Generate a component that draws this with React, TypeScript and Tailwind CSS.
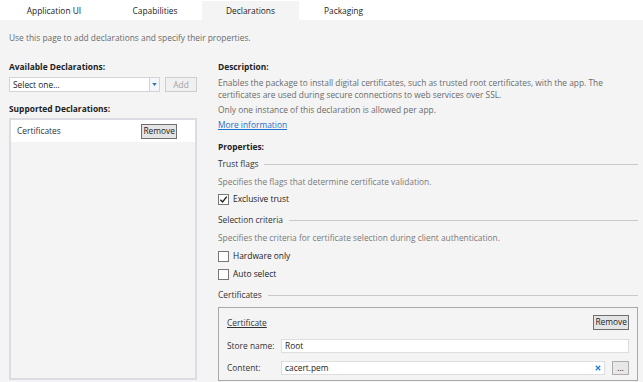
import React from 'react';

const tabs = [
  { label: 'Application UI', w: 'w-[108px]' },
  { label: 'Capabilities', w: 'w-[94px]' },
  { label: 'Declarations', w: 'w-[97px]', active: true },
  { label: 'Packaging', w: 'w-[89px]' },
];

function Check({ checked }: { checked?: boolean }) {
  return (
    <span className="w-[11px] h-[11px] border border-[#777] bg-white flex items-center justify-center shrink-0">
      {checked && (
        <svg viewBox="0 0 10 10" className="w-[9px] h-[9px]">
          <path d="M1.5 5.2 L4 7.8 L8.6 1.8" fill="none" stroke="#222" strokeWidth="1.6" />
        </svg>
      )}
    </span>
  );
}

function Section({ title }: { title: string }) {
  return (
    <div className="flex items-center h-[12px] text-[#333]">
      <span>{title}</span>
      <span className="flex-1 h-px bg-[#c9c9c9] ml-[6px]" />
    </div>
  );
}

export default function App() {
  return (
    <div
      className="w-[643px] h-[382px] bg-[#f4f4f4] overflow-hidden text-[8.4px] leading-[12px] text-[#2b2b2b]"
      style={{ fontFamily: '"Segoe UI", "Open Sans", sans-serif' }}
    >
      {/* Tabs */}
      <div className="h-[20px] bg-white flex pt-px">
        {tabs.map((t) => (
          <div
            key={t.label}
            className={`${t.w} h-[19px] flex items-center justify-center text-[#222] ${t.active ? 'bg-[#f4f4f4]' : ''}`}
          >
            {t.label}
          </div>
        ))}
      </div>

      <div className="px-[9px]">
        <p className="mt-[12px] text-[#6b6b6b]">Use this page to add declarations and specify their properties.</p>

        <div className="flex mt-[17px] gap-[21px]">
          {/* Left column */}
          <div className="w-[188px] shrink-0">
            <div className="font-bold text-[#222]">Available Declarations:</div>
            <div className="flex mt-[4px] h-[15px]">
              <div className="w-[151px] bg-white border border-[#d4d4d4] flex items-center">
                <span className="flex-1 pl-[3px] text-[#222]">Select one...</span>
                <span className="w-[10px] h-full border-l border-[#c8d7e8] bg-[#f3f7fb] flex items-center justify-center">
                  <svg viewBox="0 0 6 4" className="w-[5px] h-[3px]">
                    <path d="M0 0 H6 L3 4 Z" fill="#3b6ea5" />
                  </svg>
                </span>
              </div>
              <button className="ml-[5px] w-[32px] bg-[#f0f0f0] border border-[#cdcdcd] text-[#a3a3a3] flex items-center justify-center">
                Add
              </button>
            </div>

            <div className="font-bold text-[#222] mt-[11px]">Supported Declarations:</div>
            <div className="mt-[3px] h-[262px] border-2 border-[#dcdce4]">
              <div className="h-[22px] bg-white flex items-center pl-[6px] pr-[18px]">
                <span className="flex-1 text-[#333]">Certificates</span>
                <button className="h-[15px] px-[1px] bg-[#e4e4e4] border border-[#6f6f6f] text-[#222] leading-none">
                  Remove
                </button>
              </div>
            </div>
          </div>

          {/* Right column */}
          <div className="flex-1 mr-[-4px]">
            <div className="font-bold text-[#222]">Description:</div>
            <p className="mt-[4px] text-[#6b6b6b] pr-[10px]">
              Enables the package to install digital certificates, such as trusted root certificates, with the app. The
              certificates are used during secure connections to web services over SSL.
            </p>
            <p className="mt-[3px] text-[#6b6b6b]">Only one instance of this declaration is allowed per app.</p>
            <a className="block mt-[3px] text-[#1d72c9] underline w-fit">More information</a>

            <div className="font-bold text-[#222] mt-[10px]">Properties:</div>
            <div className="mt-[5px]">
              <Section title="Trust flags" />
            </div>
            <p className="mt-[6px] text-[#7a7a7a]">Specifies the flags that determine certificate validation.</p>
            <label className="mt-[5px] flex items-center gap-[4px] text-[#222]">
              <Check checked />
              Exclusive trust
            </label>

            <div className="mt-[9px]">
              <Section title="Selection criteria" />
            </div>
            <p className="mt-[6px] text-[#7a7a7a]">
              Specifies the criteria for certificate selection during client authentication.
            </p>
            <label className="mt-[6px] flex items-center gap-[4px] text-[#222]">
              <Check />
              Hardware only
            </label>
            <label className="mt-[6px] flex items-center gap-[4px] text-[#222]">
              <Check />
              Auto select
            </label>

            <div className="mt-[9px]">
              <Section title="Certificates" />
            </div>
            <div className="mt-[6px] h-[74px] border border-[#a9a9a9] px-[8px] pt-[7px]">
              <div className="flex items-center h-[15px]">
                <span className="flex-1 underline text-[#333]">Certificate</span>
                <button className="h-[15px] px-[1px] bg-[#e4e4e4] border border-[#6f6f6f] text-[#222] leading-none">
                  Remove
                </button>
              </div>
              <div className="flex items-center mt-[9px] h-[14px]">
                <span className="w-[54px] text-[#333]">Store name:</span>
                <div className="flex-1 h-full bg-white border border-[#dedede] flex items-center pl-[3px] text-[#222]">
                  Root
                </div>
              </div>
              <div className="flex items-center mt-[8px] h-[14px]">
                <span className="w-[54px] text-[#333]">Content:</span>
                <div className="flex-1 h-full bg-white border border-[#dedede] flex items-center pl-[3px] text-[#222]">
                  <span className="flex-1">cacert.pem</span>
                  <svg viewBox="0 0 8 8" className="w-[6px] h-[6px] mr-[3px]">
                    <path d="M1 1 L7 7 M7 1 L1 7" stroke="#1e78d0" strokeWidth="1.5" />
                  </svg>
                </div>
                <button className="ml-[7px] w-[17px] h-[14px] bg-[#e8e8e8] border border-[#adadad] text-[#222] leading-none flex items-center justify-center">
                  ...
                </button>
              </div>
            </div>
          </div>
        </div>
      </div>
    </div>
  );
}
